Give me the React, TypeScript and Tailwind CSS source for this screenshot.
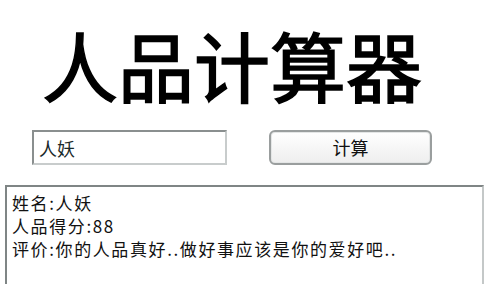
import React from "react";

const cjk = { fontFamily: '"Noto Sans CJK SC", "Noto Sans", sans-serif' };

export default function App() {
  return (
    <div className="w-[488px] h-[284px] bg-white overflow-hidden" style={cjk}>
      <h1 className="pt-[24px] pl-[42px] text-[76px] font-normal leading-[80px] text-black [-webkit-text-stroke:1.5px_black]">
        人品计算器
      </h1>
      <div className="mt-[26px] flex items-center">
        <input
          defaultValue="人妖"
          className="ml-[32px] w-[195px] h-[35px] px-[5px] text-[18px] text-[#1a2a2a] border-2 border-t-[#8a8f8f] border-l-[#8a8f8f] border-r-[#c8cccc] border-b-[#c8cccc] bg-white outline-none"
        />
        <button className="ml-[42px] w-[163px] h-[35px] text-[18px] text-[#111] rounded-[6px] border-2 border-[#9a9e9e] bg-gradient-to-b from-white to-[#eeeeee] shadow-[inset_0_0_0_1px_#e4e6e6]">
          计算
        </button>
      </div>
      <div className="mt-[20px] ml-[5px] w-[479px] h-[120px] border-2 border-t-[#7f8585] border-l-[#7f8585] border-r-[#c4c8c8] border-b-[#c4c8c8] px-[5px] pt-[4px] text-[17px] leading-[23px] text-[#111] tracking-[1.6px]">
        <div>姓名:人妖</div>
        <div>人品得分:88</div>
        <div>评价:你的人品真好..做好事应该是你的爱好吧..</div>
      </div>
    </div>
  );
}
